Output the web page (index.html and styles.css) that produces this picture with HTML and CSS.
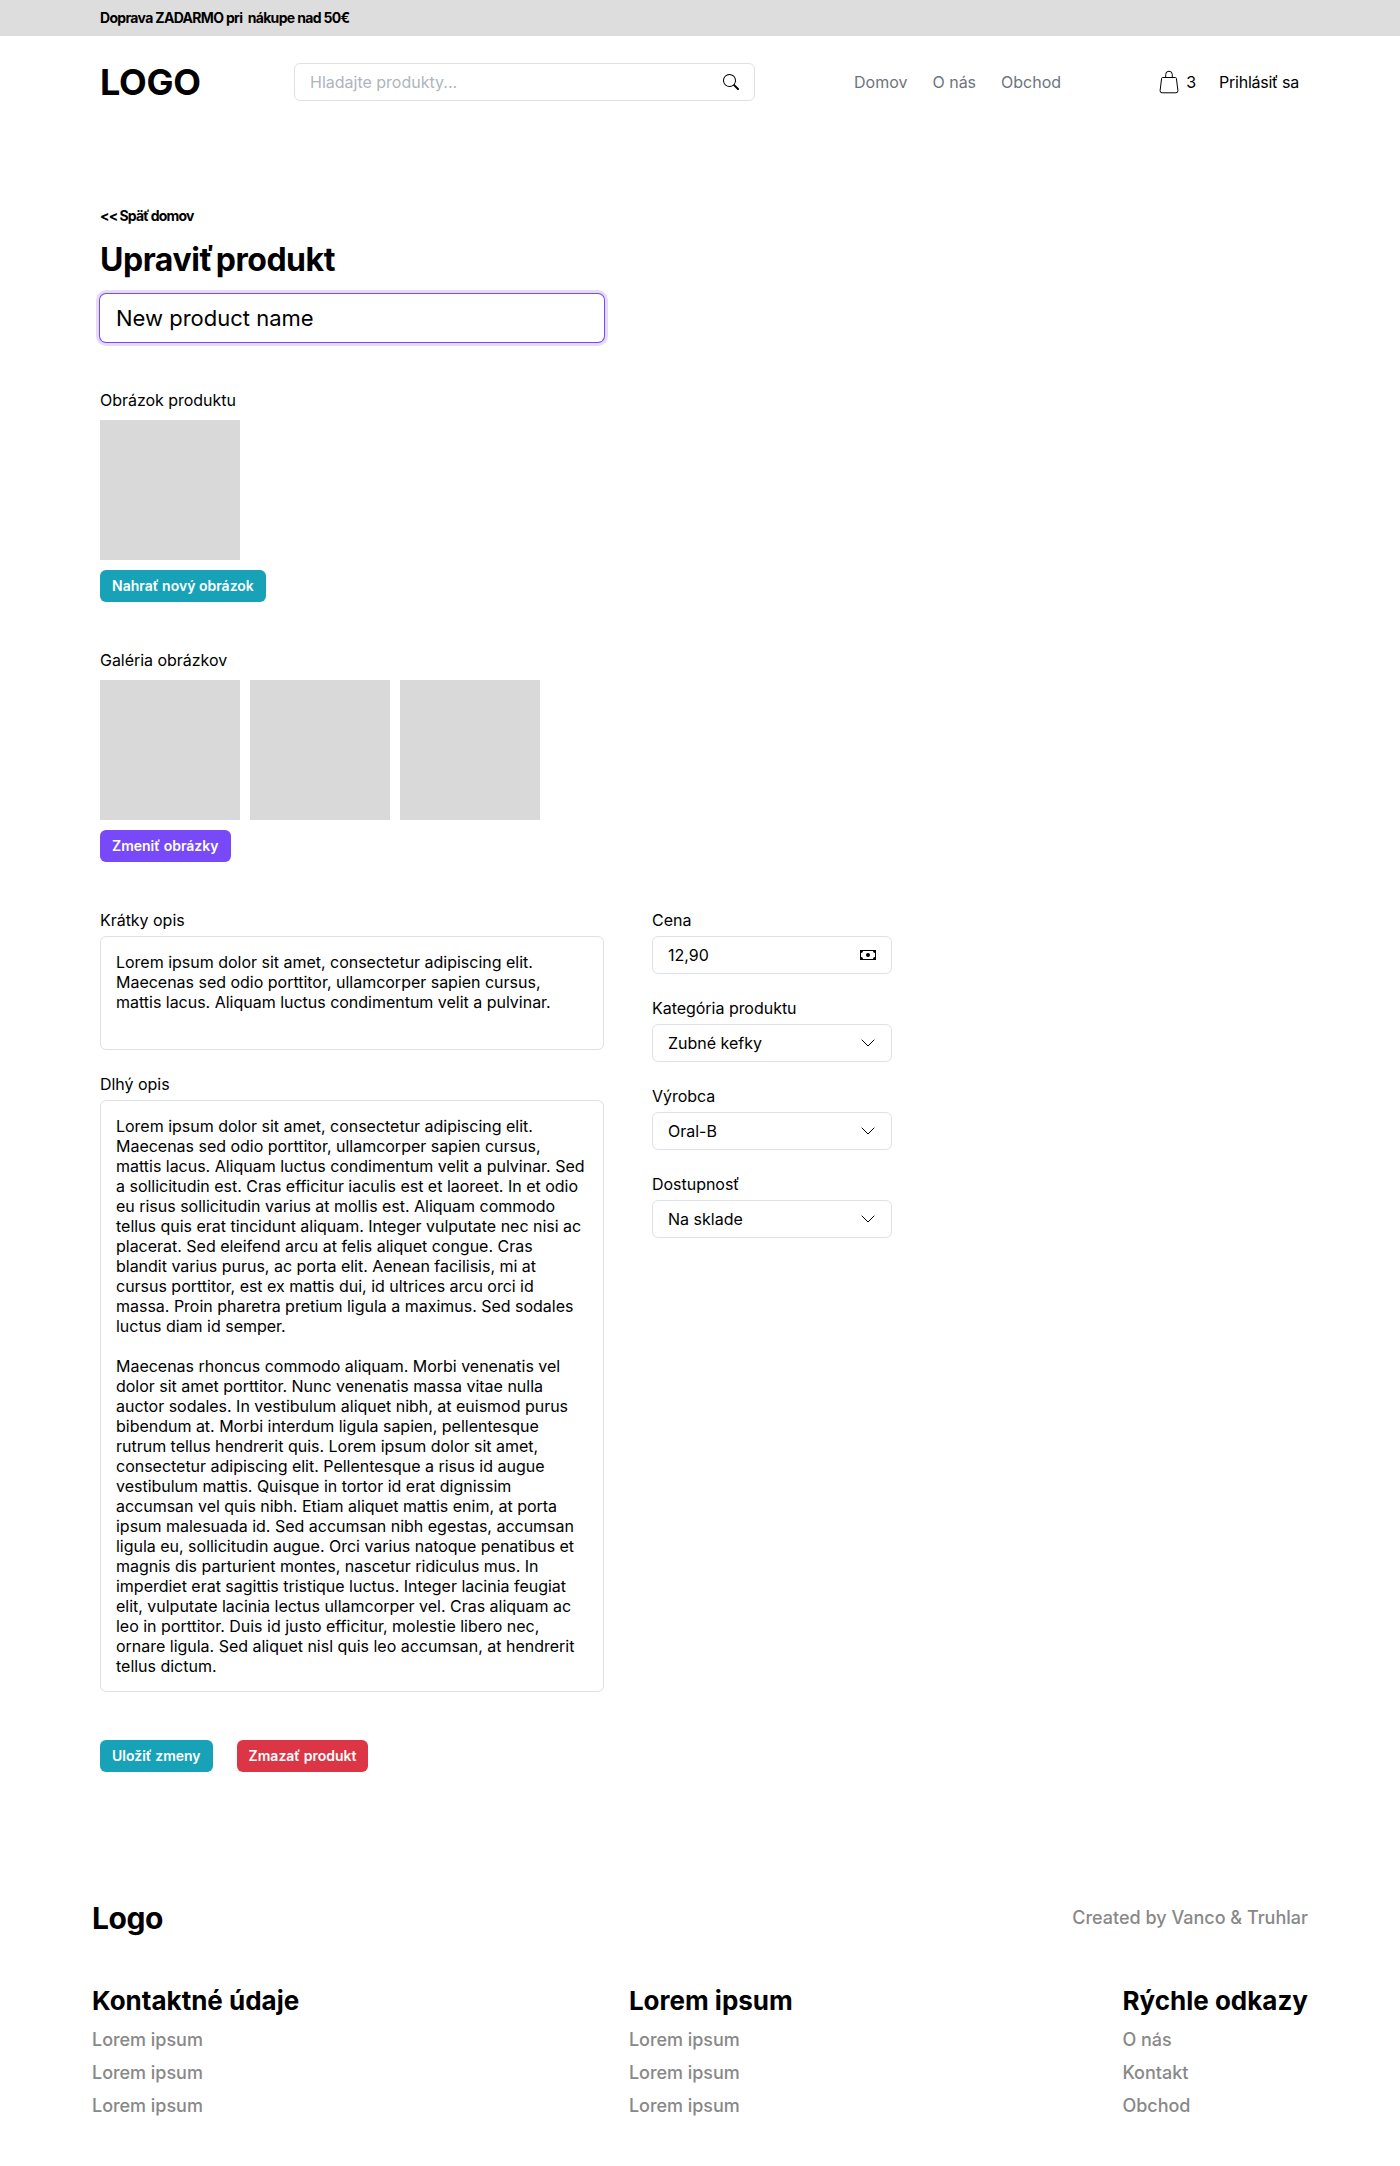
FILE: index.html
```html
<!DOCTYPE html>
<html lang="sk">
<head>
<meta charset="utf-8">
<title>Upraviť produkt</title>
<link rel="stylesheet" href="styles.css">
</head>
<body>
<div class="promo"><span class="promo-text">Doprava ZADARMO pri &nbsp;nákupe nad 50€</span></div>
<header class="header">
  <span class="logo">LOGO</span>
  <div class="search">
    <span class="search-text">Hladajte produkty...</span>
    <svg class="icon" viewBox="0 0 16 16"><path d="M11.742 10.344a6.5 6.5 0 1 0-1.397 1.398h-.001c.03.04.062.078.098.115l3.85 3.85a1 1 0 0 0 1.415-1.414l-3.85-3.85a1.007 1.007 0 0 0-.115-.1zM12 6.5a5.5 5.5 0 1 1-11 0 5.5 5.5 0 0 1 11 0z"/></svg>
  </div>
  <nav class="nav"><a>Domov</a><a>O nás</a><a>Obchod</a></nav>
  <div class="account">
    <svg class="bag" viewBox="0 0 20 24"><path d="M3.6 7.5h12.8a1 1 0 0 1 1 .9l1.5 12.2a2 2 0 0 1-2 2.200H3.100a2 2 0 0 1-2-2.200L2.600 8.400a1 1 0 0 1 1-.9zM6.700 7.500V4.500a3.300 3.300 0 0 1 6.600 0V7.500"/></svg>
    <span class="count">3</span>
    <a class="login">Prihlásiť sa</a>
  </div>
</header>
<main class="main">
  <a class="back">&lt;&lt; Späť domov</a>
  <h1 class="title">Upraviť produkt</h1>
  <div class="name-input"><span>New product name</span></div>

  <section class="section">
    <span class="label">Obrázok produktu</span>
    <div class="thumbs"><div class="thumb"></div></div>
    <button class="btn btn-info">Nahrať nový obrázok</button>
  </section>
  <section class="section">
    <span class="label">Galéria obrázkov</span>
    <div class="thumbs"><div class="thumb"></div><div class="thumb"></div><div class="thumb"></div></div>
    <button class="btn btn-primary">Zmeniť obrázky</button>
  </section>

  <div class="columns">
    <div class="column column-wide">
      <div class="field">
        <span class="label">Krátky opis</span>
        <div class="area area-short">Lorem ipsum dolor sit amet, consectetur adipiscing elit.
Maecenas sed odio porttitor, ullamcorper sapien cursus,
mattis lacus. Aliquam luctus condimentum velit a pulvinar.</div>
      </div>
      <div class="field">
        <span class="label">Dlhý opis</span>
        <div class="area area-long">Lorem ipsum dolor sit amet, consectetur adipiscing elit.
Maecenas sed odio porttitor, ullamcorper sapien cursus,
mattis lacus. Aliquam luctus condimentum velit a pulvinar. Sed
a sollicitudin est. Cras efficitur iaculis est et laoreet. In et odio
eu risus sollicitudin varius at mollis est. Aliquam commodo
tellus quis erat tincidunt aliquam. Integer vulputate nec nisi ac
placerat. Sed eleifend arcu at felis aliquet congue. Cras
blandit varius purus, ac porta elit. Aenean facilisis, mi at
cursus porttitor, est ex mattis dui, id ultrices arcu orci id
massa. Proin pharetra pretium ligula a maximus. Sed sodales
luctus diam id semper.

Maecenas rhoncus commodo aliquam. Morbi venenatis vel
dolor sit amet porttitor. Nunc venenatis massa vitae nulla
auctor sodales. In vestibulum aliquet nibh, at euismod purus
bibendum at. Morbi interdum ligula sapien, pellentesque
rutrum tellus hendrerit quis. Lorem ipsum dolor sit amet,
consectetur adipiscing elit. Pellentesque a risus id augue
vestibulum mattis. Quisque in tortor id erat dignissim
accumsan vel quis nibh. Etiam aliquet mattis enim, at porta
ipsum malesuada id. Sed accumsan nibh egestas, accumsan
ligula eu, sollicitudin augue. Orci varius natoque penatibus et
magnis dis parturient montes, nascetur ridiculus mus. In
imperdiet erat sagittis tristique luctus. Integer lacinia feugiat
elit, vulputate lacinia lectus ullamcorper vel. Cras aliquam ac
leo in porttitor. Duis id justo efficitur, molestie libero nec,
ornare ligula. Sed aliquet nisl quis leo accumsan, at hendrerit
tellus dictum.</div>
      </div>
    </div>
    <div class="column column-narrow">
      <div class="field">
        <span class="label">Cena</span>
        <div class="control"><span>12,90</span>
          <svg class="icon" viewBox="0 0 16 16"><path fill-rule="evenodd" d="M0 3h16v10H0zM3 4a2 2 0 0 1-2 2v4a2 2 0 0 1 2 2h10a2 2 0 0 1 2-2V6a2 2 0 0 1-2-2z"/><circle cx="8" cy="8" r="2"/></svg>
        </div>
      </div>
      <div class="field">
        <span class="label">Kategória produktu</span>
        <div class="control"><span>Zubné kefky</span><svg class="icon chevron" viewBox="0 0 16 16"><path d="M2 5l6 6 6-6"/></svg></div>
      </div>
      <div class="field">
        <span class="label">Výrobca</span>
        <div class="control"><span>Oral-B</span><svg class="icon chevron" viewBox="0 0 16 16"><path d="M2 5l6 6 6-6"/></svg></div>
      </div>
      <div class="field">
        <span class="label">Dostupnosť</span>
        <div class="control"><span>Na sklade</span><svg class="icon chevron" viewBox="0 0 16 16"><path d="M2 5l6 6 6-6"/></svg></div>
      </div>
    </div>
  </div>
  <div class="actions">
    <button class="btn btn-info">Uložiť zmeny</button>
    <button class="btn btn-danger">Zmazať produkt</button>
  </div>
</main>
<footer class="footer">
  <div class="footer-top"><span class="footer-logo">Logo</span><span class="credit">Created by Vanco &amp; Truhlar</span></div>
  <div class="footer-columns">
    <div class="footer-column"><h2>Kontaktné údaje</h2><a>Lorem ipsum</a><a>Lorem ipsum</a><a>Lorem ipsum</a></div>
    <div class="footer-column"><h2>Lorem ipsum</h2><a>Lorem ipsum</a><a>Lorem ipsum</a><a>Lorem ipsum</a></div>
    <div class="footer-column"><h2>Rýchle odkazy</h2><a>O nás</a><a>Kontakt</a><a>Obchod</a></div>
  </div>
</footer>
</body>
</html>
```
FILE: styles.css
```css
* { box-sizing: border-box; }
body {
  margin: 0;
  background: #fff;
  color: #000;
  font: 16px/20px Inter, sans-serif;
  white-space: nowrap;
}
.promo {
  height: 36px;
  padding: 8px 100px;
  background: #ddd;
  font-size: 14px;
  font-weight: 700;
  letter-spacing: -0.67px;
}
.header {
  display: flex;
  align-items: center;
  height: 92px;
  padding: 0 100px;
}
.logo { width: 194px; font-size: 36px; line-height: 44px; font-weight: 700; letter-spacing: -0.25px; }
.search {
  display: flex;
  align-items: center;
  justify-content: space-between;
  width: 461px;
  height: 38px;
  padding: 0 15px;
  border: 1px solid #dee2e6;
  border-radius: 6px;
  color: #adb5bd;
}
.icon { width: 16px; height: 16px; fill: #000; }
.nav { display: flex; gap: 25px; margin-left: 99px; color: #6c757d; }
.account { display: flex; align-items: center; margin-left: auto; }
.bag { width: 20px; height: 24px; margin-right: 7px; fill: none; stroke: #000; stroke-width: 1; }
.count { margin-right: 23px; }
.login { margin-right: 1px; letter-spacing: -0.25px; }
.main { display: flex; flex-direction: column; padding: 78px 100px 0; }
.back { font-size: 14px; font-weight: 700; letter-spacing: -0.8px; word-spacing: -0.5px; }
.title { margin: 14px 0; font-size: 32px; line-height: 40px; font-weight: 700; letter-spacing: -0.45px; word-spacing: -4.500px; }
.name-input {
  display: flex;
  align-items: center;
  width: 504px;
  height: 48px;
  padding: 0 16px;
  border-radius: 6px;
  box-shadow: 0 0 0 1px #7749f8, 0 0 0 4px #e6dafd;
  font-size: 22px;
}
.section { display: flex; flex-direction: column; align-items: flex-start; gap: 10px; margin-top: 48px; }
.label { letter-spacing: -0.03px; }
.thumbs { display: flex; gap: 10px; }
.thumb { width: 140px; height: 140px; background: #d9d9d9; }
.btn {
  height: 32px;
  padding: 0 12px;
  border: 0;
  border-radius: 6px;
  color: #fff;
  font: 600 14px/20px Inter, sans-serif;
}
.btn-info { background: #17a2b8; }
.btn-primary { background: #7749f8; }
.btn-danger { background: #dc3545; }
.columns { display: flex; gap: 48px; margin-top: 48px; }
.column { display: flex; flex-direction: column; gap: 24px; }
.column-wide { width: 504px; }
.column-narrow { width: 240px; }
.field { display: flex; flex-direction: column; gap: 6px; }
.area, .control { border: 1px solid #dee2e6; border-radius: 6px; padding: 15px; }
.area { white-space: pre; letter-spacing: -0.015px; }
.area-short { height: 114px; }
.area-long { height: 592px; }
.control { display: flex; align-items: center; justify-content: space-between; height: 38px; }
.chevron { fill: none; stroke: #000; stroke-width: 1; stroke-linecap: round; stroke-linejoin: round; }
.actions { display: flex; gap: 24px; margin-top: 48px; }
.footer { padding: 128px 92px 0; color: #888; font-size: 18px; font-weight: 500; }
.footer-top { display: flex; align-items: center; justify-content: space-between; height: 36px; }
.footer-logo { color: #000; font-size: 30px; line-height: 36px; font-weight: 700; letter-spacing: -0.4px; }
.footer-columns { display: flex; justify-content: space-between; margin-top: 48px; }
.footer-column { display: flex; flex-direction: column; gap: 11px; }
.footer-column h2 { margin: 0; color: #000; font-size: 26px; line-height: 34px; font-weight: 700; }
.footer-column a { line-height: 22px; letter-spacing: -0.03px; }
```
